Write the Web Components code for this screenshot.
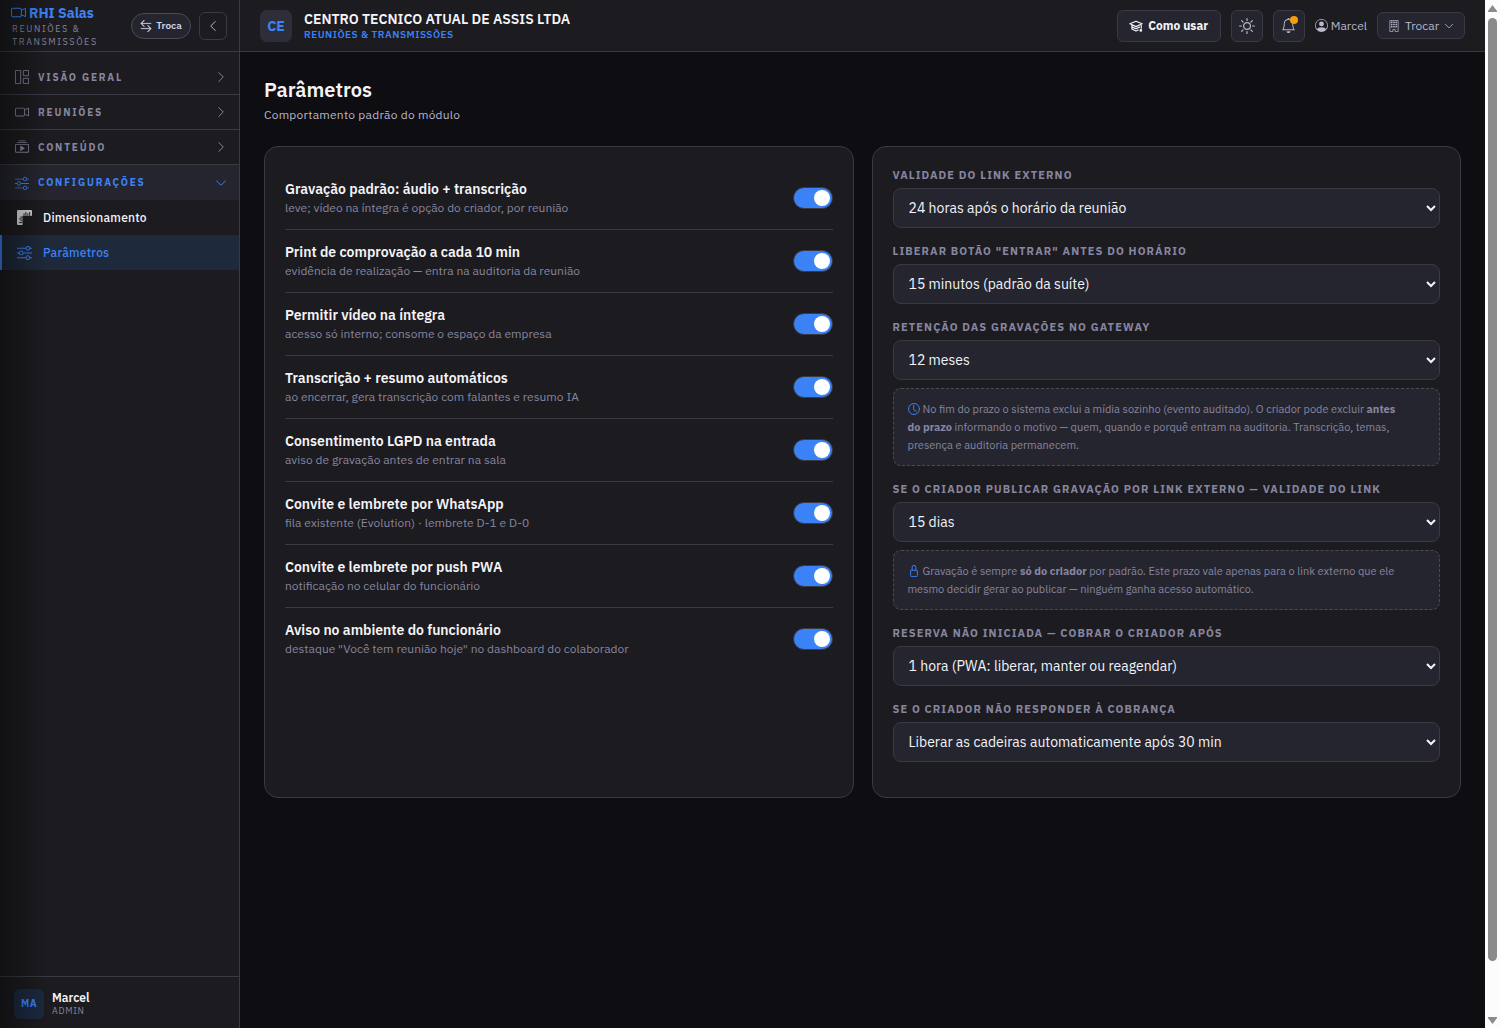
<!DOCTYPE html>
<html lang="pt-BR">
<head>
<meta charset="utf-8">
<title>RHI Salas · Parâmetros</title>
<style>
  :root {
    --bg: #0e0d12; --panel: #1c1b1f; --raised: #25252f; --line: #3a3944;
    --text: #f4f4f8; --soft: #b9b8cc; --muted: #8786a0; --accent: #3b82f6;
  }
  body { margin: 0; background: var(--bg); color: var(--text); font-family: "IBM Plex Sans", Roboto, "Liberation Sans", sans-serif; }
</style>
</head>
<body>
<app-shell>
  <side-bar slot="side">
    <nav-group icon="grid" label="Visão geral"></nav-group>
    <nav-group icon="video" label="Reuniões"></nav-group>
    <nav-group icon="play" label="Conteúdo"></nav-group>
    <nav-group icon="sliders" label="Configurações" open>
      <nav-item icon="ruler" label="Dimensionamento"></nav-item>
      <nav-item icon="sliders" label="Parâmetros" active></nav-item>
    </nav-group>
  </side-bar>
  <top-bar></top-bar>
  <settings-page heading="Parâmetros" sub="Comportamento padrão do módulo">
    <panel-card>
      <toggle-row label="Gravação padrão: áudio + transcrição" note="leve; vídeo na íntegra é opção do criador, por reunião"></toggle-row>
      <toggle-row label="Print de comprovação a cada 10 min" note="evidência de realização — entra na auditoria da reunião"></toggle-row>
      <toggle-row label="Permitir vídeo na íntegra" note="acesso só interno; consome o espaço da empresa"></toggle-row>
      <toggle-row label="Transcrição + resumo automáticos" note="ao encerrar, gera transcrição com falantes e resumo IA"></toggle-row>
      <toggle-row label="Consentimento LGPD na entrada" note="aviso de gravação antes de entrar na sala"></toggle-row>
      <toggle-row label="Convite e lembrete por WhatsApp" note="fila existente (Evolution) · lembrete D-1 e D-0"></toggle-row>
      <toggle-row label="Convite e lembrete por push PWA" note="notificação no celular do funcionário"></toggle-row>
      <toggle-row label="Aviso no ambiente do funcionário" note="destaque &quot;Você tem reunião hoje&quot; no dashboard do colaborador"></toggle-row>
    </panel-card>
    <panel-card>
      <select-field label="Validade do link externo" value="24 horas após o horário da reunião"></select-field>
      <select-field label="Liberar botão &quot;Entrar&quot; antes do horário" value="15 minutos (padrão da suíte)"></select-field>
      <select-field label="Retenção das gravações no gateway" value="12 meses">
        <hint-box icon="clock">No fim do prazo o sistema exclui a mídia sozinho (evento auditado). O criador pode excluir <b>antes do prazo</b> informando o motivo — quem, quando e porquê entram na auditoria. Transcrição, temas, presença e auditoria permanecem.</hint-box>
      </select-field>
      <select-field label="Se o criador publicar gravação por link externo — validade do link" value="15 dias">
        <hint-box icon="lock">Gravação é sempre <b>só do criador</b> por padrão. Este prazo vale apenas para o link externo que ele mesmo decidir gerar ao publicar — ninguém ganha acesso automático.</hint-box>
      </select-field>
      <select-field label="Reserva não iniciada — cobrar o criador após" value="1 hora (PWA: liberar, manter ou reagendar)"></select-field>
      <select-field label="Se o criador não responder à cobrança" value="Liberar as cadeiras automaticamente após 30 min"></select-field>
    </panel-card>
  </settings-page>
  <scroll-rail slot="rail"></scroll-rail>
</app-shell>

<script>
const ICONS = {
  video: '<path d="M0 5a2 2 0 0 1 2-2h7.5a2 2 0 0 1 1.983 1.738l3.11-1.382A1 1 0 0 1 16 4.269v7.462a1 1 0 0 1-1.406.913l-3.111-1.382A2 2 0 0 1 9.5 13H2a2 2 0 0 1-2-2zm11.5 5.175 3.5 1.556V4.269l-3.5 1.556zM2 4a1 1 0 0 0-1 1v6a1 1 0 0 0 1 1h7.5a1 1 0 0 0 1-1V5a1 1 0 0 0-1-1z"/>',
  sliders: '<path fill-rule="evenodd" d="M11.5 2a1.5 1.5 0 1 0 0 3 1.5 1.5 0 0 0 0-3M9.05 3a2.5 2.5 0 0 1 4.9 0H16v1h-2.05a2.5 2.5 0 0 1-4.9 0H0V3zM4.5 7a1.5 1.5 0 1 0 0 3 1.5 1.5 0 0 0 0-3M2.05 8a2.5 2.5 0 0 1 4.9 0H16v1H6.95a2.5 2.5 0 0 1-4.9 0H0V8zm9.45 4a1.5 1.5 0 1 0 0 3 1.5 1.5 0 0 0 0-3m-2.45 1a2.5 2.5 0 0 1 4.9 0H16v1h-2.05a2.5 2.5 0 0 1-4.9 0H0v-1z"/>',
  swap: '<path stroke="currentColor" stroke-width=".3" d="M1 11.5a.5.5 0 0 0 .5.5h11.793l-3.147 3.146a.5.5 0 0 0 .708.708l4-4a.5.5 0 0 0 0-.708l-4-4a.5.5 0 0 0-.708.708L13.293 11H1.5a.5.5 0 0 0-.5.5m14-7a.5.5 0 0 1-.5.5H2.707l3.147 3.146a.5.5 0 1 1-.708.708l-4-4a.5.5 0 0 1 0-.708l4-4a.5.5 0 1 1 .708.708L2.707 4H14.5a.5.5 0 0 1 .5.5"/>',
  grid: '<g fill="none" stroke="currentColor"><path d="M.5.5h6v15h-6zM9.5.5h6v6h-6zM9.5 9.500h6v6h-6z"/></g>',
  play: '<path d="M2 3a.5.5 0 0 0 .5.5h11a.5.5 0 0 0 0-1h-11A.5.5 0 0 0 2 3m2-2a.5.5 0 0 0 .5.5h7a.5.5 0 0 0 0-1h-7A.5.5 0 0 0 4 1m2.765 5.576A.5.5 0 0 0 6 7v5a.5.5 0 0 0 .765.424l4-2.5a.5.5 0 0 0 0-.848z"/><path d="M1.5 14.5A1.5 1.5 0 0 1 0 13V6a1.5 1.5 0 0 1 1.5-1.500h13A1.5 1.5 0 0 1 16 6v7a1.5 1.5 0 0 1-1.500 1.500zm13-1a.5.5 0 0 0 .5-.5V6a.5.5 0 0 0-.5-.5h-13A.5.5 0 0 0 1 6v7a.5.5 0 0 0 .5.5z"/>',
  ruler: '<path d="M1 0h14a1 1 0 0 1 1 1v5H6v9a1 1 0 0 1-1 1H1a1 1 0 0 1-1-1V1a1 1 0 0 1 1-1"/><path fill="none" stroke="var(--panel)" d="M7.500 6V3.500M9.500 6V2M11.500 6V3.500M13.500 6V2M6 7.500H3.500M6 9.500H2M6 11.500H3.500M6 13.500H2"/>',
  right: '<path fill="none" stroke="currentColor" stroke-width="1.3" stroke-linecap="round" stroke-linejoin="round" d="M5 2l6 6-6 6"/>',
  left: '<path fill="none" stroke="currentColor" stroke-width="1.3" stroke-linecap="round" stroke-linejoin="round" d="M11 2L5 8l6 6"/>',
  down: '<path fill="none" stroke="currentColor" stroke-width="1.3" stroke-linecap="round" stroke-linejoin="round" d="M2 5l6 6 6-6"/>',
  school: '<g fill="none" stroke="currentColor" stroke-width="1.3" stroke-linejoin="round"><path d="M8 2.500L1 5.500l7 3.200 7-3.200zM3.300 7v4.300L8 13.600l3-1.300M3.300 9L8 11.200l4.500-2.200M14 6v5"/></g><circle cx="13.500" cy="13" r="1.500"/>',
  sun: '<g fill="none" stroke="currentColor" stroke-width="1.200" stroke-linecap="round"><circle cx="8" cy="8" r="3.400"/><path d="M8 .6v1.900M8 13.500v1.900M.6 8h1.900M13.500 8h1.900M2.700 2.700l1.400 1.400M11.900 11.900l1.400 1.400M2.700 13.300l1.400-1.400M11.900 4.100l1.400-1.400"/></g>',
  bell: '<path d="M8 16a2 2 0 0 0 2-2H6a2 2 0 0 0 2 2M8 1.918l-.797.161A4 4 0 0 0 4 6c0 .628-.134 2.197-.459 3.742-.16.767-.376 1.566-.663 2.258h10.244c-.287-.692-.502-1.490-.663-2.258C12.134 8.197 12 6.628 12 6a4 4 0 0 0-3.203-3.920zM14.220 12c.223.447.481.801.780 1H1c.299-.199.557-.553.780-1C2.680 10.200 3 6.880 3 6c0-2.420 1.720-4.440 4.005-4.901a1 1 0 1 1 1.990 0A5 5 0 0 1 13 6c0 .880.320 4.200 1.220 6"/>',
  person: '<path d="M11 6a3 3 0 1 1-6 0 3 3 0 0 1 6 0"/><path fill-rule="evenodd" d="M0 8a8 8 0 1 1 16 0A8 8 0 0 1 0 8m8-7a7 7 0 0 0-5.468 11.370C3.242 11.226 4.805 10 8 10s4.757 1.225 5.468 2.370A7 7 0 0 0 8 1"/>',
  building: '<path fill="none" stroke="currentColor" d="M2.500.5h11v15h-4v-3h-3v3h-4z"/><path d="M4 2h2v2H4zm3 0h2v2H7zm3 0h2v2h-2zM4 5h2v2H4zm3 0h2v2H7zm3 0h2v2h-2zM4 8h2v2H4zm3 0h2v2H7zm3 0h2v2h-2z"/>',
  clock: '<g fill="none" stroke="currentColor" stroke-width="1.300" stroke-linecap="round"><circle cx="8" cy="8" r="7.300"/><path d="M7.500 3.500V9l3.500 2"/></g>',
  lock: '<path fill="none" stroke="currentColor" stroke-width="1.300" d="M5.500 7V3a2.500 2.500 0 0 1 5 0v4M4.500 7h7a1 1 0 0 1 1 1v6a1.500 1.500 0 0 1-1.500 1.500H5A1.500 1.500 0 0 1 3.500 14V8a1 1 0 0 1 1-1z"/>'
};
const icon = (name, size) => `<svg class="i" viewBox="0 0 16 16" width="${size}" height="${size}" fill="currentColor" aria-hidden="true">${ICONS[name]}</svg>`;
const RESET = `*{box-sizing:border-box} :host{display:block;box-sizing:border-box} .i{flex:none;display:block} button,select{font-family:inherit;color:inherit;margin:0;cursor:pointer}`;

function element(name, css, html) {
  customElements.define(name, class extends HTMLElement {
    connectedCallback() {
      if (this.shadowRoot) return;
      const attr = key => (this.getAttribute(key) || '').replace(/&/g, '&amp;').replace(/"/g, '&quot;');
      this.attachShadow({ mode: 'open' }).innerHTML = `<style>${RESET}${css}</style>${html(attr, this)}`;
    }
  });
}

element('app-shell', `
  :host{display:flex;min-height:100vh}
  main{flex:1;min-width:0}
`, () => `<slot name="side"></slot><main><slot></slot></main><slot name="rail"></slot>`);

element('side-bar', `
  :host{display:flex;flex-direction:column;flex:none;width:240px;background:var(--panel);border-right:1px solid var(--line);position:relative}
  :host::after{content:"";position:absolute;inset:0 auto 0 0;width:48px;background:linear-gradient(90deg,rgba(0,0,0,.4),transparent);pointer-events:none}
  header{display:flex;align-items:center;gap:8px;height:52px;padding:0 12px 0 11px;border-bottom:1px solid var(--line)}
  .brand{flex:1;min-width:0}
  .name{display:flex;align-items:center;gap:3px;color:var(--accent);font-size:14px;font-weight:700;line-height:18px}
  .sub{padding-left:1px;color:var(--muted);font-size:9px;line-height:13px;letter-spacing:.18em;text-transform:uppercase}
  button{display:flex;align-items:center;justify-content:center;padding:0;color:var(--soft)}
  .pill{gap:4px;width:60px;height:26px;border:1px solid #4a4958;border-radius:13px;background:var(--raised);font-size:10px;font-weight:600;color:#d4d3e2}
  .fold{width:28px;height:28px;border:1px solid var(--line);border-radius:6px;background:none}
  nav{flex:1;padding-top:8px}
  footer{display:flex;align-items:center;gap:8px;height:52px;padding:2px 14px 0;border-top:1px solid var(--line)}
  .avatar{display:grid;place-items:center;width:30px;height:30px;border-radius:6px;background:#1c2940;color:var(--accent);font-size:10px;font-weight:700;letter-spacing:.05em}
  .who{font-size:12px;font-weight:600;line-height:15px}
  .role{font-size:9px;line-height:12px;letter-spacing:.08em;color:var(--muted)}
`, () => `
  <header><div class="brand"><div class="name">${icon('video', 15)}<span>RHI Salas</span></div><div class="sub">Reuniões &amp; Transmissões</div></div>
  <button class="pill">${icon('swap', 12)}<span>Troca</span></button><button class="fold" aria-label="Recolher menu">${icon('left', 12)}</button></header>
  <nav><slot></slot></nav>
  <footer><div class="avatar">MA</div><div><div class="who">Marcel</div><div class="role">ADMIN</div></div></footer>`);

element('nav-group', `
  button{display:flex;align-items:center;gap:9px;width:100%;height:35px;padding:0 12px 0 15px;border:0;border-bottom:1px solid var(--line);background:none;color:var(--muted);font-size:10px;font-weight:700;letter-spacing:.18em;text-transform:uppercase;text-align:left}
  span{flex:1}
  :host([open]) button{background:var(--raised);color:var(--accent);border-bottom:0}
`, (a, el) => `<button aria-expanded="${el.hasAttribute('open')}">${icon(a('icon'), 14)}<span>${a('label')}</span>${icon(el.hasAttribute('open') ? 'down' : 'right', 12)}</button><slot></slot>`);

element('nav-item', `
  a{display:flex;align-items:center;gap:11px;height:35px;padding-left:15px;border-left:2px solid transparent;color:var(--text);font-size:12px;font-weight:500;letter-spacing:.02em;text-decoration:none}
  .i{color:#d8d7da}
  :host([active]) a{border-color:var(--accent);background:#1e293b;color:var(--accent)}
  :host([active]) .i{color:inherit}
`, a => `<a href="#">${icon(a('icon'), 15)}<span>${a('label')}</span></a>`);

element('top-bar', `
  :host{display:flex;align-items:center;gap:10px;height:52px;padding:0 20px;background:var(--panel);border-bottom:1px solid var(--line)}
  .logo{display:grid;place-items:center;width:32px;height:32px;border-radius:7px;background:#2e2e3a;color:var(--accent);font-size:14px;font-weight:700}
  .org{flex:1;min-width:0;padding-left:2px}
  .name{font-size:14px;font-weight:600;line-height:17px}
  .mod{font-size:10px;font-weight:600;line-height:13px;letter-spacing:.05em;color:var(--accent)}
  button{display:flex;align-items:center;justify-content:center;height:32px;min-width:32px;padding:0;border:1px solid var(--line);border-radius:6px;background:var(--raised);color:var(--soft);position:relative}
  .help{gap:5px;width:104px;color:var(--text);font-size:12px;font-weight:700}
  .dot{position:absolute;top:5px;right:6px;width:8px;height:8px;border-radius:50%;background:#f59e0b}
  .user{display:flex;align-items:center;gap:3px;color:var(--soft);font-size:12px}
  .swap{gap:5px;width:88px;height:27px;font-size:12px}
`, () => `
  <div class="logo">CE</div>
  <div class="org"><div class="name">CENTRO TECNICO ATUAL DE ASSIS LTDA</div><div class="mod">REUNIÕES &amp; TRANSMISSÕES</div></div>
  <button class="help">${icon('school', 14)}<span>Como usar</span></button>
  <button aria-label="Tema">${icon('sun', 16)}</button>
  <button aria-label="Notificações">${icon('bell', 15)}<i class="dot"></i></button>
  <div class="user">${icon('person', 13)}<span>Marcel</span></div>
  <button class="swap">${icon('building', 12)}<span>Trocar</span>${icon('down', 10)}</button>`);

element('settings-page', `
  :host{padding:24px}
  h1{margin:0;font-size:20px;line-height:28px;font-weight:600}
  p{margin:2px 0 22px;font-size:12px;line-height:18px;letter-spacing:.02em;color:var(--soft)}
  .cols{display:grid;grid-template-columns:1fr 1fr;gap:18px}
`, a => `<h1>${a('heading')}</h1><p>${a('sub')}</p><div class="cols"><slot></slot></div>`);

element('panel-card', `
  :host{padding:20px;border:1px solid var(--line);border-radius:14px;background:var(--panel)}
`, () => `<slot></slot>`);

element('toggle-row', `
  label{display:flex;align-items:center;gap:16px;height:63px;border-bottom:1px solid var(--line);cursor:pointer}
  :host(:last-child) label{border-bottom-color:transparent}
  .t{flex:1;min-width:0}
  b{display:block;font-size:14px;line-height:20px;font-weight:600}
  small{display:block;font-size:12px;line-height:18px;color:var(--muted)}
  input{appearance:none;flex:none;width:40px;height:22px;margin:0;padding:2px;border:1px solid var(--line);border-radius:11px;background:var(--raised);display:flex;cursor:pointer}
  input::before{content:"";width:16px;height:16px;border-radius:50%;background:#fff}
  input:checked{background:var(--accent);justify-content:flex-end}
`, a => `<label><span class="t"><b>${a('label')}</b><small>${a('note')}</small></span><input type="checkbox" checked></label>`);

element('select-field', `
  :host{margin-bottom:15px}
  label{display:block;margin-bottom:5px;font-size:11px;line-height:16px;font-weight:700;letter-spacing:.1em;text-transform:uppercase;color:var(--muted)}
  select{display:block;width:100%;height:40px;padding:0 11px;border:1px solid var(--line);border-radius:8px;background-color:var(--raised);color:var(--text);font-size:14px}
`, a => `<label for="s">${a('label')}</label><select id="s"><option>${a('value')}</option></select><slot></slot>`);

element('hint-box', `
  :host{margin-top:8px;padding:11px 32px 11px 14px;border:1px dashed #4a4958;border-radius:8px;background:var(--raised);color:var(--muted);font-size:11px;line-height:18px}
  .i{display:inline-block;vertical-align:-2px;margin-right:3px;color:var(--accent)}
`, a => `${icon(a('icon'), 12)}<slot></slot>`);

element('scroll-rail', `
  :host{display:flex;flex-direction:column;align-items:center;flex:none;width:15px;padding:5px 0 4px;gap:6px;background:#fcfcfc}
  svg{display:block;fill:#8b8b8b}
  .track{flex:1;display:flex;width:9px}
  .thumb{width:9px;height:95%;border-radius:5px;background:#8b8b8b}
`, () => `
  <svg width="9" height="7" viewBox="0 0 9 7"><path d="M4.500 0L9 6v1H0V6z"/></svg>
  <div class="track"><div class="thumb"></div></div>
  <svg width="9" height="7" viewBox="0 0 9 7"><path d="M4.500 7L9 1V0H0v1z"/></svg>`);
</script>
</body>
</html>
